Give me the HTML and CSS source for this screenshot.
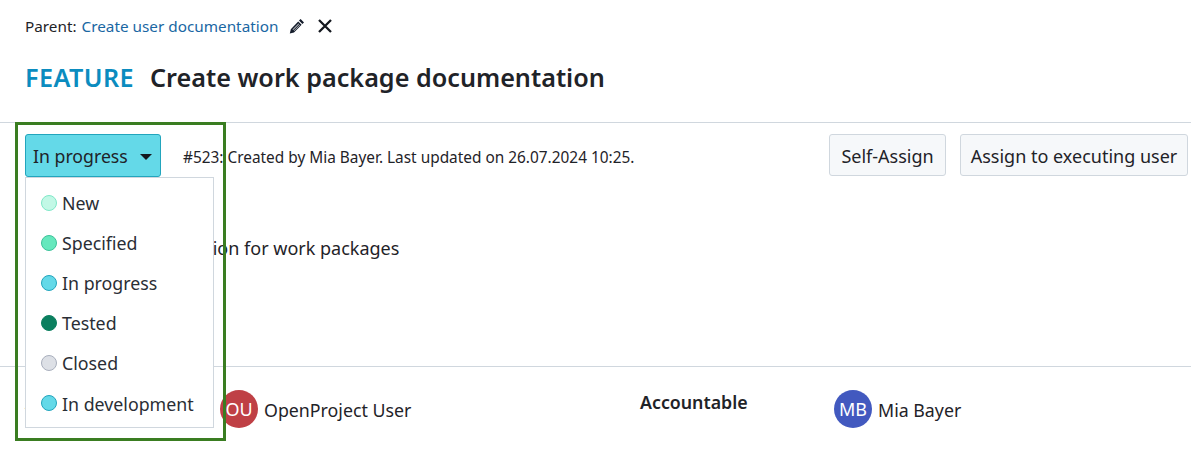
FILE: index.html
```html
<!DOCTYPE html>
<html lang="en">
<head>
<meta charset="utf-8">
<title>Create work package documentation</title>
<link rel="stylesheet" href="styles.css">
</head>
<body>
<main class="page">
  <div class="parent">
    <span class="parent-label">Parent:</span>
    <a class="parent-link" href="#">Create user documentation</a>
    <svg class="icon-pencil" width="16" height="16" viewBox="0 0 16 16"><path d="M11.6 1l3.4 3.4-1.6 1.6L10 2.6zM9.2 3.4l3.4 3.4-7.6 7.6-4.2 1 1-4.2zM9.6 5.6l-6 6 .4.4 6-6zM10.7 6.7l-6 6 .4.4 6-6z" fill="#141c2b" fill-rule="evenodd"/></svg>
    <svg class="icon-close" width="16" height="16" viewBox="0 0 16 16"><path d="M2 2l12 12M14 2L2 14" stroke="#14181f" stroke-width="2.3" fill="none"/></svg>
  </div>
  <h1 class="title"><span class="type">FEATURE</span><span class="subject">Create work package documentation</span></h1>
  <div class="toolbar">
    <button class="status" type="button">In progress<span class="caret"></span></button>
    <p class="meta">#523: Created by Mia Bayer. Last updated on 26.07.2024 10:25.</p>
    <div class="actions">
      <button class="btn self" type="button">Self-Assign</button>
      <button class="btn assign" type="button">Assign to executing user</button>
    </div>
  </div>
  <p class="description">Create a documentation for work packages</p>
  <div class="people">
    <div class="person-cell first">
      <span class="label">Assignee</span>
      <span class="avatar ou">OU</span><span class="name">OpenProject User</span>
    </div>
    <div class="person-cell second">
      <span class="label">Accountable</span>
      <span class="avatar mb">MB</span><span class="name">Mia Bayer</span>
    </div>
  </div>
</main>
<div class="menu">
  <ul class="menu-list">
    <li class="menu-item"><span class="dot new"></span>New</li>
    <li class="menu-item"><span class="dot specified"></span>Specified</li>
    <li class="menu-item"><span class="dot progress"></span>In progress</li>
    <li class="menu-item"><span class="dot tested"></span>Tested</li>
    <li class="menu-item"><span class="dot closed"></span>Closed</li>
    <li class="menu-item"><span class="dot progress"></span>In development</li>
  </ul>
</div>
<div class="highlight"></div>
</body>
</html>
```
FILE: styles.css
```css
* { box-sizing: border-box; }
html, body { margin: 0; height: 465px; overflow: hidden; background: #fff; }
body { font-family: "Noto Sans", "Open Sans", sans-serif; color: #1f2328; position: relative; }
.page { padding: 0 0 0 25px; }
.parent { display: flex; align-items: center; height: 26px; margin-top: 13px; font-size: 15.3px; line-height: 24px; }
.parent-label { margin-right: 5px; }
.parent-link { color: #1a67a3; text-decoration: none; }
.icon-pencil { margin-left: 11px; }
.icon-close { margin-left: 12px; }
.title { margin: 19px 0 0; height: 38px; display: flex; align-items: center; font-size: 25.2px; line-height: 38px; font-weight: 600; }
.type { color: #0b8cbf; margin-right: 16px; letter-spacing: 0.4px; }
.subject { color: #1f2328; }
.toolbar { margin: 26px 0 0 -25px; padding: 11px 3px 0 25px; height: 60px; border-top: 1px solid #d0d7de; display: flex; align-items: flex-start; }
.status { width: 136px; height: 43px; padding: 0 0 0 7px; display: flex; align-items: center; background: #64d9e8; border: 1px solid #22a5bd; border-radius: 3px; font: inherit; font-size: 17.7px; color: #1f2328; }
.caret { margin-left: 12px; margin-top: 2px; border: 6.5px solid transparent; border-top-color: #14181f; border-bottom-width: 0; }
.meta { margin: 14px 0 0 22px; font-size: 15.4px; line-height: 20px; flex: 1; }
.actions { display: flex; gap: 14px; }
.btn { height: 42px; padding: 2px 0 0; background: #f6f8fa; border: 1px solid #d0d7de; border-radius: 3px; font: inherit; font-size: 18px; color: #1f2328; }
.btn.self { width: 117px; }
.btn.assign { width: 228px; }
.description { margin: 53px 0 0; padding-left: 10px; font-size: 18px; line-height: 26px; }
.people { margin: 105px 0 0 -25px; padding-left: 25px; height: 99px; border-top: 1px solid #d0d7de; display: flex; }
.person-cell { display: flex; align-items: flex-start; padding-top: 23px; }
.person-cell.first { width: 615px; }
.label { font-size: 17.8px; font-weight: 600; line-height: 24px; }
.first .label { width: 195px; }
.second .label { width: 194px; }
.avatar { width: 38px; height: 38px; border-radius: 50%; color: #fff; font-size: 18px; display: flex; align-items: center; justify-content: center; margin-right: 6px; }
.ou { background: #bf4045; }
.mb { background: #4259bf; }
.name { font-size: 17.8px; line-height: 40px; }
.menu { position: absolute; left: 25px; top: 177px; width: 189px; height: 251px; background: #fff; border: 1px solid #d0d7de; }
.menu-list { list-style: none; margin: 0; padding: 5px 0 0 15px; }
.menu-item { height: 40px; display: flex; align-items: center; font-size: 17.8px; color: #2a2e35; }
.menu-item:last-child { padding-top: 2px; }
.menu-item:last-child .dot { margin-top: -2px; }
.dot { width: 16px; height: 16px; border-radius: 50%; border: 1px solid; margin-right: 5px; flex: none; }
.dot.new { background: #c2f8e6; border-color: #7fe8c8; }
.dot.specified { background: #66e8bd; border-color: #3cc29a; }
.dot.progress { background: #64d9e8; border-color: #22a5bd; }
.dot.tested { background: #0b7f5f; border-color: #0b7f5f; }
.dot.closed { background: #dde0e6; border-color: #a9afbd; }
.highlight { position: absolute; left: 15px; top: 122px; width: 211px; height: 319px; border: 3px solid #3a7d21; pointer-events: none; }
```
